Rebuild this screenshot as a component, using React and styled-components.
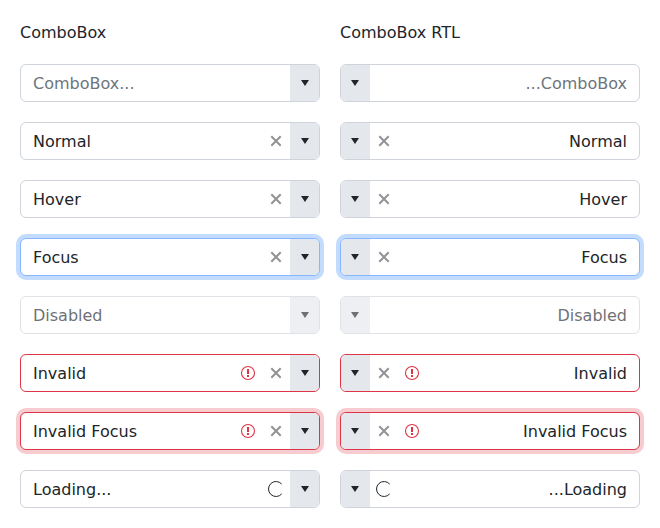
import React from 'react';
import styled, { createGlobalStyle, css } from 'styled-components';

const Global = createGlobalStyle`
  *, *::before, *::after { box-sizing: border-box; }
  body {
    margin: 0;
    background: #fff;
    color: #212529;
    font: 16px/24px "DejaVu Sans", sans-serif;
    overflow: hidden;
  }
`;

const Page = styled.main`
  display: grid;
  grid-template-columns: 300px 300px;
  column-gap: 20px;
  padding: 20px;
`;

const Column = styled.section`
  display: flex;
  flex-direction: column;
  gap: 20px;
`;

const Title = styled.div`
  height: 24px;
  padding-top: 1px;
`;

const Field = styled.div`
  display: flex;
  height: 38px;
  border: 1px solid #ced4da;
  border-radius: 6px;
  background: #fff;
  overflow: hidden;
  ${p => p.$focused && css`
    border-color: #86b7fe;
    box-shadow: 0 0 0 4px rgba(13, 110, 253, 0.25);
  `}
  ${p => p.$invalid && css`border-color: #dc3545;`}
  ${p => p.$invalid && p.$focused && css`
    box-shadow: 0 0 0 4px rgba(220, 53, 69, 0.25);
  `}
  ${p => p.$disabled && css`opacity: 0.65;`}
`;

const Value = styled.div`
  flex: 1;
  padding: 7px 12px 5px;
  white-space: nowrap;
  color: ${p => (p.$placeholder ? '#6c757d' : 'inherit')};
`;

const Adornment = styled.span`
  display: flex;
  flex: none;
  width: 28px;
  align-items: center;
  justify-content: center;
  color: ${p => p.$color};
`;

const Trigger = styled.span`
  display: flex;
  flex: none;
  width: 30px;
  margin-inline-end: -1px;
  align-items: center;
  justify-content: center;
  background: #e4e7ec;
`;

const Svg = styled.svg`
  display: block;
`;

const Cross = () => (
  <Svg width="16" height="16" viewBox="0 0 16 16">
    <path d="M3.3 3.3l9.4 9.4M12.7 3.3l-9.4 9.4" stroke="currentColor" strokeWidth="2" />
  </Svg>
);

const Alert = () => (
  <Svg width="16" height="16" viewBox="0 0 16 16">
    <circle cx="8" cy="8" r="6.5" fill="none" stroke="currentColor" strokeWidth="1.1" />
    <path d="M7 4h2v5H7zM7 10h2v2H7z" fill="currentColor" />
  </Svg>
);

const Spinner = () => (
  <Svg width="16" height="16" viewBox="0 0 16 16">
    <path d="M13.7 3.1a7.5 7.5 0 1 0 0 9.8" fill="none" stroke="currentColor" />
  </Svg>
);

const Arrow = () => (
  <Svg width="16" height="16" viewBox="0 0 16 16">
    <path d="M4 5h8l-4 6z" fill="currentColor" />
  </Svg>
);

const rows = [
  { text: 'ComboBox...', placeholder: true },
  { text: 'Normal', clear: true },
  { text: 'Hover', clear: true },
  { text: 'Focus', clear: true, focused: true },
  { text: 'Disabled', disabled: true },
  { text: 'Invalid', clear: true, invalid: true },
  { text: 'Invalid Focus', clear: true, invalid: true, focused: true },
  { text: 'Loading...', loading: true },
];

const ComboBox = ({ text, placeholder, clear, loading, focused, invalid, disabled }) => (
  <Field $focused={focused} $invalid={invalid} $disabled={disabled}>
    <Value $placeholder={placeholder}>{text}</Value>
    {invalid && <Adornment $color="#dc3545"><Alert /></Adornment>}
    {clear && <Adornment $color="#909294"><Cross /></Adornment>}
    {loading && <Adornment $color="#212529"><Spinner /></Adornment>}
    <Trigger><Arrow /></Trigger>
  </Field>
);

export default function App() {
  return (
    <>
      <Global />
      <Page>
        <Column>
          <Title>ComboBox</Title>
          {rows.map(row => <ComboBox key={row.text} {...row} />)}
        </Column>
        <Column>
          <Title>ComboBox RTL</Title>
          {rows.map(row => (
            <div dir="rtl" key={row.text}><ComboBox {...row} /></div>
          ))}
        </Column>
      </Page>
    </>
  );
}
